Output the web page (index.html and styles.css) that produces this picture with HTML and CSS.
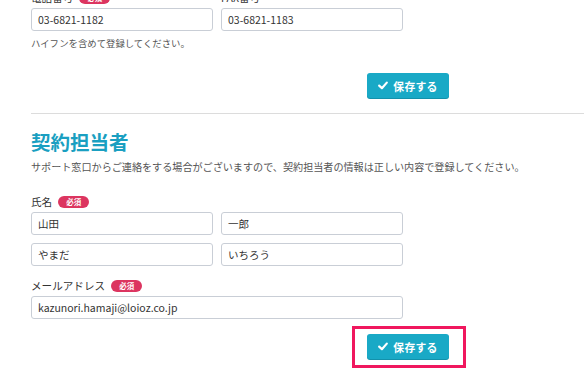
FILE: index.html
```html
<!DOCTYPE html>
<html lang="ja">
<head>
<meta charset="utf-8">
<link rel="stylesheet" href="styles.css">
</head>
<body>
<div class="page">
  <div class="grid first">
    <div class="field">
      <div class="label">電話番号<span class="badge">必須</span></div>
      <div class="input">03-6821-1182</div>
    </div>
    <div class="field">
      <div class="label">FAX番号</div>
      <div class="input">03-6821-1183</div>
    </div>
  </div>
  <p class="help">ハイフンを含めて登録してください。</p>
  <div class="actions">
    <button class="btn"><svg class="check" viewBox="0 0 10 9" width="10" height="9"><path d="M1.2 4.6 L3.9 7.2 L8.8 1.6" fill="none" stroke="#fff" stroke-width="2.2" stroke-linecap="round" stroke-linejoin="round"/></svg>保存する</button>
  </div>
</div>
<hr class="divider">
<div class="page">
  <h2 class="title">契約担当者</h2>
  <p class="desc">サポート窓口からご連絡をする場合がございますので、契約担当者の情報は正しい内容で登録してください。</p>
  <div class="label">氏名<span class="badge">必須</span></div>
  <div class="grid">
    <div class="input">山田</div>
    <div class="input">一郎</div>
    <div class="input">やまだ</div>
    <div class="input">いちろう</div>
  </div>
  <div class="label mail">メールアドレス<span class="badge">必須</span></div>
  <div class="input wide">kazunori.hamaji@loioz.co.jp</div>
  <div class="highlight">
    <button class="btn"><svg class="check" viewBox="0 0 10 9" width="10" height="9"><path d="M1.2 4.6 L3.9 7.2 L8.8 1.6" fill="none" stroke="#fff" stroke-width="2.2" stroke-linecap="round" stroke-linejoin="round"/></svg>保存する</button>
  </div>
</div>
</body>
</html>
```
FILE: styles.css
```css
html, body {
  margin: 0;
  padding: 0;
  background: #fff;
  overflow: hidden;
}
body {
  font-family: "Noto Sans CJK JP", "Noto Sans", sans-serif;
  color: #333;
}
.page {
  padding-left: 31px;
}
.grid {
  display: grid;
  grid-template-columns: 182px 182px;
  column-gap: 8px;
  row-gap: 8px;
}
.grid.first {
  margin-top: -9px;
}
.field {
  display: flex;
  flex-direction: column;
  gap: 3px;
}
.label {
  display: flex;
  align-items: center;
  height: 14px;
  font-size: 10.6px;
  line-height: 14px;
  color: #333;
  margin-bottom: 3px;
}
.field .label {
  margin-bottom: 0;
}
.badge {
  display: inline-flex;
  align-items: center;
  justify-content: center;
  width: 31px;
  height: 12px;
  margin-left: 6px;
  border-radius: 6px;
  background: #dc3560;
  color: #fff;
  font-size: 7.5px;
  font-weight: bold;
  line-height: 12px;
}
.input {
  box-sizing: border-box;
  height: 23px;
  border: 1px solid #c9ced6;
  border-radius: 3px;
  padding: 0 6px;
  font-size: 10.5px;
  line-height: 21px;
  color: #333;
  background: #fff;
}
.input.wide {
  width: 372px;
}
.help {
  margin: 5px 0 0;
  font-size: 9.4px;
  line-height: 14px;
  color: #555;
}
.actions {
  margin-top: 23px;
  padding-left: 336px;
}
.btn {
  display: flex;
  align-items: center;
  justify-content: center;
  gap: 5px;
  box-sizing: border-box;
  width: 82px;
  height: 25px;
  padding: 0;
  border: 0;
  border-radius: 3px;
  background: #19a9c6;
  color: #fff;
  font-family: "Noto Sans CJK JP", sans-serif;
  font-size: 10.8px;
  font-weight: bold;
  letter-spacing: 0.3px;
  box-shadow: 0 1px 0 #1391ab;
}
.check {
  display: block;
}
.divider {
  margin: 15px 0 0 31px;
  border: 0;
  border-top: 1px solid #dcdcdc;
  height: 0;
}
.title {
  margin: 15px 0 0;
  font-size: 19.5px;
  line-height: 26px;
  font-weight: bold;
  color: #1a9fc1;
}
.desc {
  margin: 4px 0 0;
  font-size: 10.1px;
  line-height: 16px;
  color: #555;
  white-space: nowrap;
}
.desc + .label {
  margin-top: 20px;
}
.label.mail {
  margin-top: 13px;
}
.highlight {
  box-sizing: border-box;
  width: 114px;
  height: 42px;
  margin: 7px 0 0 321px;
  padding: 5px 0 0 12px;
  border: 3px solid #f0175e;
}
```
